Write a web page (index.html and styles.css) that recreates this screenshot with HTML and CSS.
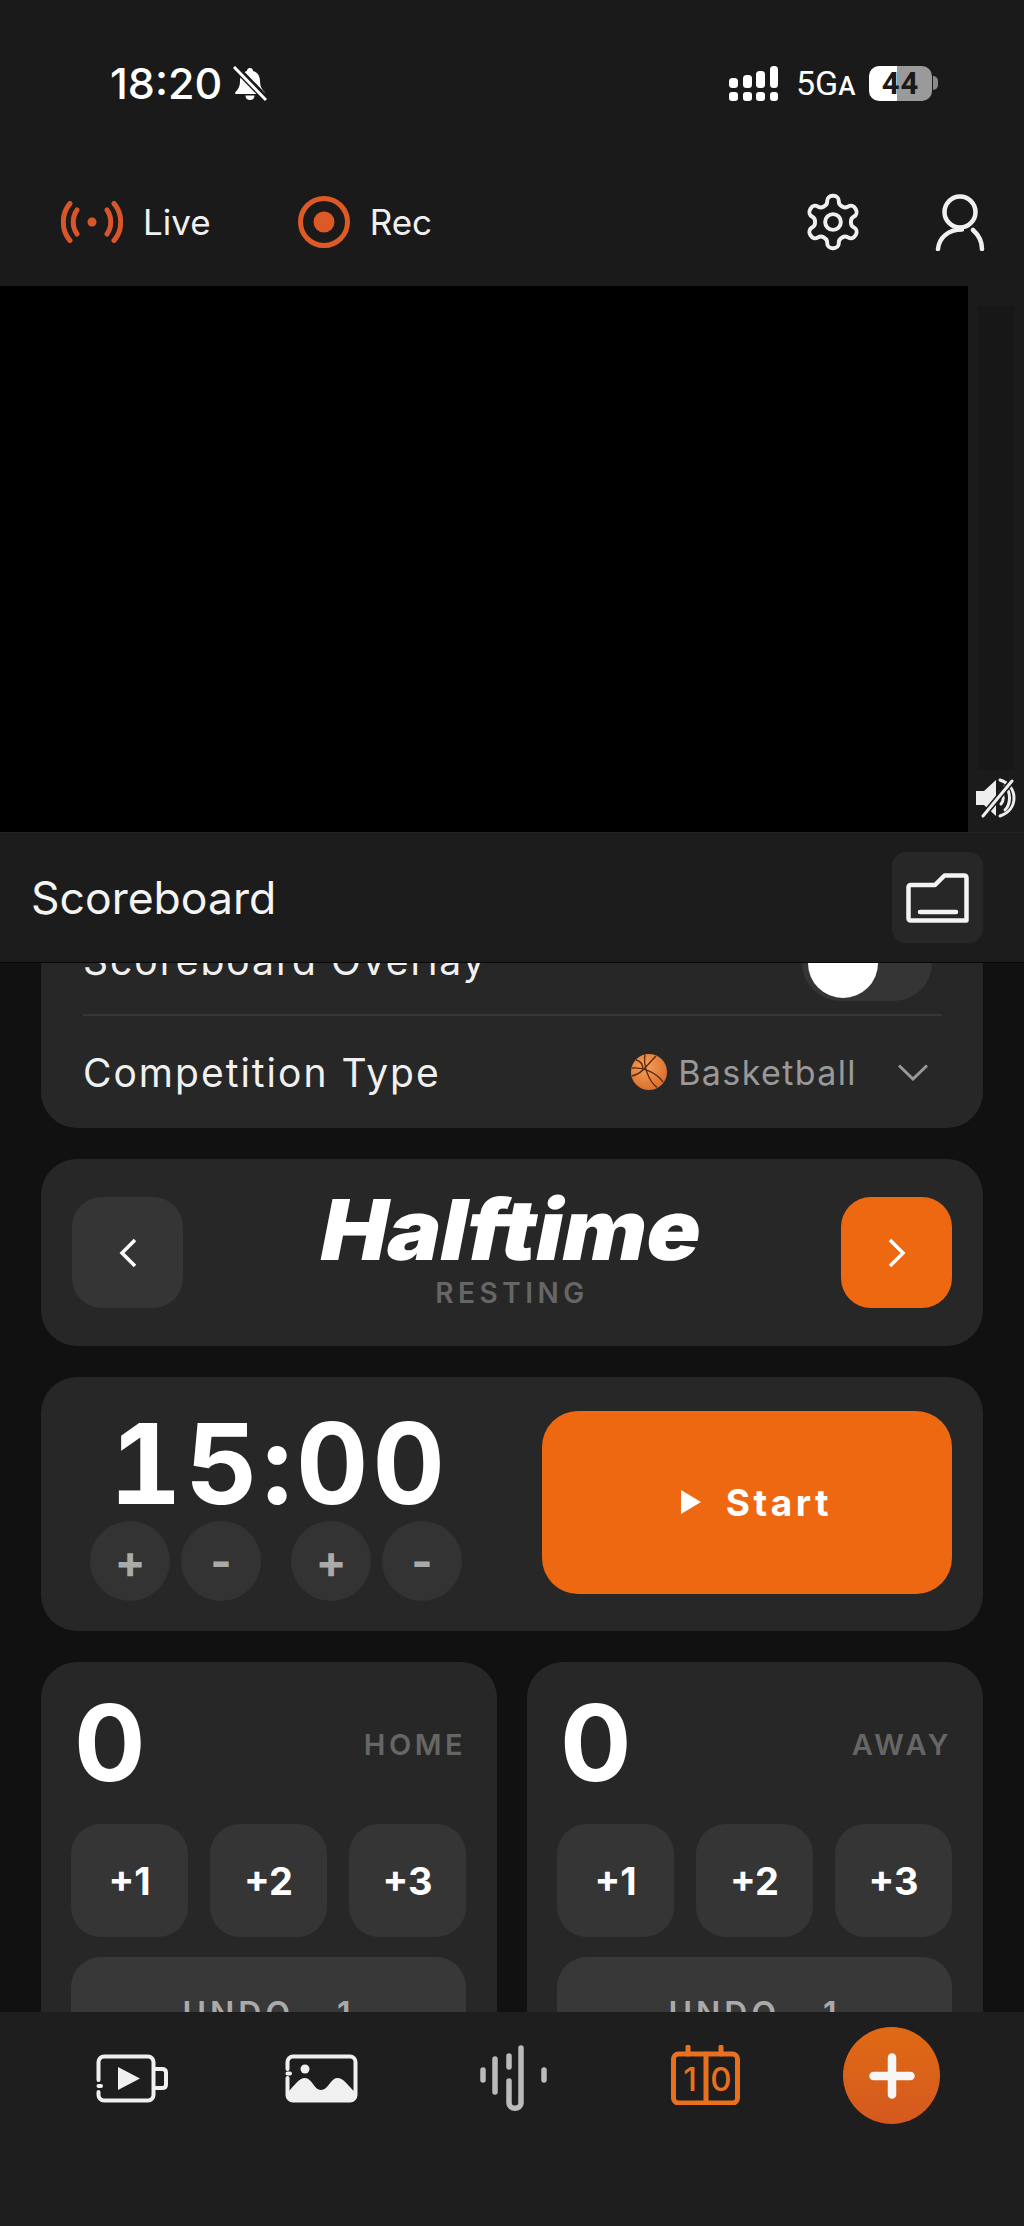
FILE: index.html
```html
<!DOCTYPE html>
<html lang="en">
<head>
    <meta charset="UTF-8">
    <meta name="viewport" content="width=device-width, initial-scale=1.0">
    <title>Scoreboard</title>
    <link rel="stylesheet" href="styles.css">
</head>
<body>

    <header class="header">
        <div class="status">
            <div class="status-left">
                <span class="clock">18:20</span>
                <svg class="bell" viewBox="0 0 34 35">
                    <path d="M17 2c-1.800 0-3 1.200-3 3-4.500 1.300-7 5-7 10 0 5-1.500 8-4.500 11-.8.900-.3 2 1 2h27c1.300 0 1.800-1.100 1-2-3-3-4.500-6-4.500-11 0-5-2.500-8.700-7-10 0-1.800-1.200-3-3-3z" fill="#fff"/>
                    <path d="M12.500 29.500h9c0 3-2 4.500-4.500 4.500s-4.500-1.500-4.500-4.500z" fill="#fff"/>
                    <path d="M2 1l32 33" stroke="#1a1a1a" stroke-width="7"/>
                    <path d="M1 1l32 33" stroke="#fff" stroke-width="3"/>
                </svg>
            </div>
            <div class="status-right">
                <svg class="signal" viewBox="0 0 49 35" fill="#fff">
                    <rect x="0" y="12" width="9" height="10" rx="3.500"/>
                    <rect x="14" y="9" width="9" height="13" rx="3.500"/>
                    <rect x="27" y="5" width="9" height="17" rx="3.500"/>
                    <rect x="41" y="0" width="8" height="22" rx="3.500"/>
                    <rect x="0" y="26" width="9" height="9" rx="3"/>
                    <rect x="14" y="26" width="9" height="9" rx="3"/>
                    <rect x="27" y="26" width="9" height="9" rx="3"/>
                    <rect x="41" y="26" width="8" height="9" rx="3"/>
                </svg>
                <span class="network">5G<small>A</small></span>
                <div class="battery"><span>44</span></div>
                <div class="battery-tip"></div>
            </div>
        </div>
        <div class="toolbar">
            <div class="toolbar-left">
                <div class="tool">
                    <svg class="live-icon" viewBox="0 0 62 42" fill="none" stroke="#d9562a" stroke-width="5" stroke-linecap="round">
                        <circle cx="31" cy="21" r="4.500" fill="#d9562a" stroke="none"/>
                        <path d="M16 9c-5 7-5 17 0 24"/>
                        <path d="M46 9c5 7 5 17 0 24"/>
                        <path d="M9 2.500C0 13 0 29 9 39.500"/>
                        <path d="M53 2.500C62 13 62 29 53 39.500"/>
                    </svg>
                    <span>Live</span>
                </div>
                <div class="tool">
                    <svg class="rec-icon" viewBox="0 0 52 52">
                        <circle cx="26" cy="26" r="23.500" fill="none" stroke="#dd5a26" stroke-width="5"/>
                        <circle cx="26" cy="26" r="10.500" fill="#dd5a26"/>
                    </svg>
                    <span>Rec</span>
                </div>
            </div>
            <div class="toolbar-right">
                <svg class="gear" viewBox="1.300 1.300 21.400 21.400" fill="none" stroke="#f0f0f0" stroke-width="1.500" stroke-linejoin="round">
                    <path d="M12.220 2h-.44a2 2 0 0 0-2 2v.18a2 2 0 0 1-1 1.730l-.43.25a2 2 0 0 1-2 0l-.15-.08a2 2 0 0 0-2.730.73l-.22.38a2 2 0 0 0 .73 2.730l.15.1a2 2 0 0 1 1 1.720v.51a2 2 0 0 1-1 1.740l-.15.09a2 2 0 0 0-.73 2.730l.22.38a2 2 0 0 0 2.730.73l.15-.08a2 2 0 0 1 2 0l.43.25a2 2 0 0 1 1 1.730V20a2 2 0 0 0 2 2h.44a2 2 0 0 0 2-2v-.18a2 2 0 0 1 1-1.730l.43-.25a2 2 0 0 1 2 0l.15.08a2 2 0 0 0 2.730-.73l.22-.39a2 2 0 0 0-.73-2.730l-.15-.08a2 2 0 0 1-1-1.740v-.5a2 2 0 0 1 1-1.740l.15-.09a2 2 0 0 0 .73-2.730l-.22-.38a2 2 0 0 0-2.730-.73l-.15.08a2 2 0 0 1-2 0l-.43-.25a2 2 0 0 1-1-1.730V4a2 2 0 0 0-2-2z"/>
                    <circle cx="12" cy="12" r="3"/>
                </svg>
                <svg class="user" viewBox="0 0 50 57" fill="none" stroke="#f0f0f0" stroke-width="4.500" stroke-linecap="round">
                    <circle cx="25" cy="18" r="15.500"/>
                    <path d="M3 55C4 44 13 35.500 27 35.500"/>
                    <path d="M38 36c5 4.500 9 11 9 19"/>
                </svg>
            </div>
        </div>
    </header>

    <section class="preview">
        <div class="video"></div>
        <div class="strip">
            <div class="meter"></div>
            <svg class="mute" viewBox="0 0 40 40" fill="none" stroke="#eee" stroke-linecap="round">
                <path d="M0 13h8L20 2v36L8 27H0z" fill="#eee" stroke="none"/>
                <path d="M25 14c3 3.500 3 8.500 0 12" stroke-width="3"/>
                <path d="M29 8c6 6 6 18 0 24" stroke-width="3"/>
                <path d="M24 2c9 3 14 10 14 18s-5 15-14 18" stroke-width="3"/>
                <path d="M7 38L36 3" stroke="#1a1a1a" stroke-width="6"/>
                <path d="M7 38L36 3" stroke-width="3"/>
            </svg>
        </div>
    </section>

    <div class="sheet-bar">
        <span class="sheet-title">Scoreboard</span>
        <button class="folder-btn">
            <svg class="folder" viewBox="0 0 63 50" fill="none" stroke="#f4f4f4" stroke-width="4.500" stroke-linejoin="round" stroke-linecap="round">
                <path d="M2.500 14c0-1 1-2 2-2H29L38.500 2.500H58c1.500 0 2.500 1 2.500 2.500v42.500H5c-1.500 0-2.500-1-2.500-2.500z"/>
                <path d="M14 39h36"/>
            </svg>
        </button>
    </div>

    <main class="content">
        <div class="card settings">
            <div class="setting-row overlay-row">
                <span class="setting-label">Scoreboard Overlay</span>
                <div class="toggle"><div class="knob"></div></div>
            </div>
            <div class="setting-row type-row">
                <span class="setting-label">Competition Type</span>
                <div class="type-value">
                    <svg class="ball" viewBox="0 0 36 36">
                        <defs>
                            <radialGradient id="ballFill" cx="0.4" cy="0.35" r="0.75">
                                <stop offset="0" stop-color="#f4a156"/>
                                <stop offset="1" stop-color="#d9692a"/>
                            </radialGradient>
                        </defs>
                        <circle cx="18" cy="18" r="18" fill="url(#ballFill)"/>
                        <g fill="none" stroke="#5c2a10" stroke-width="1.400">
                            <path d="M1 14c10-1 24 4 31 14"/>
                            <path d="M14 .5c-2 10 3 26 12 33"/>
                            <path d="M25 2c-5 5-9 10-13 14-3 3-7 5-11 6"/>
                            <path d="M5 6c5 1 7 5 7 10"/>
                        </g>
                    </svg>
                    <span>Basketball</span>
                    <svg class="chevron" viewBox="0 0 30 17" fill="none" stroke="#999" stroke-width="3">
                        <path d="M1 1.500L15 15 29 1.500"/>
                    </svg>
                </div>
            </div>
        </div>

        <div class="card period">
            <button class="square-btn">
                <svg class="arrow" viewBox="0 0 20 30" fill="none" stroke="#fff" stroke-width="3.500">
                    <path d="M17 2L4 15l13 13"/>
                </svg>
            </button>
            <div class="period-text">
                <div class="period-name">Halftime</div>
                <div class="period-sub">RESTING</div>
            </div>
            <button class="square-btn next">
                <svg class="arrow" viewBox="0 0 20 30" fill="none" stroke="#fff" stroke-width="3.500">
                    <path d="M3 2l13 13L3 28"/>
                </svg>
            </button>
        </div>

        <div class="card clock-card">
            <div class="timer-col">
                <div class="timer">15:00</div>
                <div class="adjust">
                    <div class="adjust-pair">
                        <button class="round-btn">+</button>
                        <button class="round-btn">-</button>
                    </div>
                    <div class="adjust-pair">
                        <button class="round-btn">+</button>
                        <button class="round-btn">-</button>
                    </div>
                </div>
            </div>
            <button class="start-btn">
                <svg class="play" viewBox="0 0 22 26"><path d="M1 1l20 12L1 25z" fill="#fff"/></svg>
                <span>Start</span>
            </button>
        </div>

        <div class="teams">
            <div class="card team">
                <div class="team-head">
                    <span class="team-score">0</span>
                    <span class="team-name">HOME</span>
                </div>
                <div class="points">
                    <button class="point-btn">+1</button>
                    <button class="point-btn">+2</button>
                    <button class="point-btn">+3</button>
                </div>
                <button class="undo-btn">UNDO -1</button>
            </div>
            <div class="card team">
                <div class="team-head">
                    <span class="team-score">0</span>
                    <span class="team-name">AWAY</span>
                </div>
                <div class="points">
                    <button class="point-btn">+1</button>
                    <button class="point-btn">+2</button>
                    <button class="point-btn">+3</button>
                </div>
                <button class="undo-btn">UNDO -1</button>
            </div>
        </div>
    </main>

    <nav class="tabbar">
        <svg class="tab-media" viewBox="0 0 73 49" fill="none" stroke="#f0f0f0" stroke-width="4" stroke-linecap="round">
            <path d="M2.500 26V8a5.500 5.500 0 0 1 5.500-5.500h44a5.500 5.500 0 0 1 5.500 5.500v33a5.500 5.500 0 0 1-5.500 5.500H8A5.500 5.500 0 0 1 2.500 41v-3"/>
            <path d="M2.500 32h2.500"/>
            <path d="M58 15h8c2.500 0 4 1 4 3.500v12c0 2.500-1.500 3.500-4 3.500h-8"/>
            <path d="M22 13l22 11.500L22 36z" fill="#f0f0f0" stroke="none"/>
        </svg>
        <svg class="tab-media tab-image" viewBox="0 0 73 49" fill="none" stroke="#f0f0f0" stroke-width="4" stroke-linecap="round">
            <path d="M2.500 15V8a5.500 5.500 0 0 1 5.500-5.500h57a5.500 5.500 0 0 1 5.500 5.500v33a5.500 5.500 0 0 1-5.500 5.500H8A5.500 5.500 0 0 1 2.500 41V24"/>
            <path d="M2.500 19.500h2.500"/>
            <circle cx="20" cy="15" r="4.500" fill="#f0f0f0" stroke="none"/>
            <path d="M3 38c6-6 11-14 17-14 7 0 9 12 16 12s10-12 16-12c7 0 11 8 18 14v3c0 3-2 5-5 5H8c-3 0-5-2-5-5z" fill="#f0f0f0" stroke="none"/>
        </svg>
        <svg class="tab-wave" viewBox="0 0 68 66" fill="none" stroke="#bbb" stroke-width="5.500" stroke-linecap="round">
            <path d="M4 25v10"/>
            <path d="M16 14v33"/>
            <path d="M30 11v11"/>
            <path d="M30 36v22c0 7 12 7 12 0V3"/>
            <path d="M65 25v10"/>
        </svg>
        <svg class="tab-score" viewBox="0 0 69 60" fill="none" stroke="#e9701c" stroke-width="5" stroke-linecap="round">
            <rect x="2.500" y="9" width="64" height="49" rx="5"/>
            <path d="M35 9v49"/>
            <path d="M17 2v7"/>
            <path d="M50 2v7"/>
            <text x="19" y="46" text-anchor="middle" class="tab-digit">1</text>
            <text x="50" y="46" text-anchor="middle" class="tab-digit">0</text>
        </svg>
        <button class="fab">
            <svg class="fab-plus" viewBox="0 0 46 46" stroke="#f6f6f6" stroke-width="8.500" stroke-linecap="round">
                <path d="M23 4.500v37"/>
                <path d="M4.500 23h37"/>
            </svg>
        </button>
    </nav>

</body>
</html>
```

FILE: styles.css
```css
* {
    box-sizing: border-box;
}
html, body {
    margin: 0;
    padding: 0;
}
body {
    width: 1024px;
    height: 2226px;
    display: flex;
    flex-direction: column;
    overflow: hidden;
    background-color: #111111;
    color: #ffffff;
    font-family: Inter, "Liberation Sans", sans-serif;
}
button {
    border: 0;
    padding: 0;
    color: inherit;
    font-family: inherit;
}
svg {
    display: block;
    flex: none;
}

/* header */
.header {
    height: 286px;
    flex: none;
    background-color: #1a1a1a;
    padding-top: 60px;
}
.status {
    height: 46px;
    display: flex;
    align-items: center;
    justify-content: space-between;
    padding: 0 86px 0 110px;
}
.status-left, .status-right {
    display: flex;
    align-items: center;
}
.clock {
    font-size: 43px;
    font-weight: 500;
    width: 113px;
    white-space: nowrap;
}
.bell {
    width: 34px;
    height: 35px;
    margin-left: 10px;
}
.signal {
    width: 49px;
    height: 35px;
}
.network {
    width: 57px;
    margin-left: 18px;
    font-family: Roboto, sans-serif;
    font-size: 34px;
    font-weight: 400;
    white-space: nowrap;
}
.network small {
    font-size: 26px;
    font-weight: 500;
}
.battery {
    width: 63px;
    height: 35px;
    margin-left: 16px;
    border-radius: 10px;
    background: linear-gradient(90deg, #ffffff 44%, #9a9a9a 44%);
    color: #1a1a1a;
    font-family: Roboto, sans-serif;
    font-size: 31px;
    font-weight: 700;
    letter-spacing: 1px;
    text-align: center;
    line-height: 36px;
}
.battery-tip {
    width: 5px;
    height: 14px;
    margin-left: 1px;
    border-radius: 0 5px 5px 0;
    background-color: #8a8a8a;
}
.toolbar {
    height: 88px;
    margin-top: 72px;
    display: flex;
    align-items: center;
    justify-content: space-between;
    padding: 0 39px 0 61px;
}
.toolbar-left, .toolbar-right {
    display: flex;
    align-items: center;
}
.toolbar-left {
    gap: 87px;
}
.toolbar-right {
    gap: 74px;
}
.tool {
    display: flex;
    align-items: center;
    gap: 20px;
    font-size: 35px;
    color: #f0f0f0;
}
.live-icon {
    width: 62px;
    height: 42px;
}
.rec-icon {
    width: 52px;
    height: 52px;
}
.gear {
    width: 56px;
    height: 58px;
}
.user {
    width: 50px;
    height: 57px;
}

/* camera preview */
.preview {
    height: 546px;
    flex: none;
    display: flex;
    background-color: #000000;
}
.video {
    flex: 1;
}
.strip {
    width: 56px;
    display: flex;
    flex-direction: column;
    align-items: center;
    padding: 20px 0 14px;
    background-color: #1b1b1b;
}
.meter {
    width: 36px;
    flex: 1;
    background-color: #171717;
    margin-bottom: 8px;
}
.mute {
    width: 40px;
    height: 40px;
}

/* sheet title */
.sheet-bar {
    height: 131px;
    flex: none;
    display: flex;
    align-items: center;
    justify-content: space-between;
    padding: 0 41px 0 31px;
    background-color: #1c1c1c;
    border-top: 1px solid #222222;
    border-bottom: 1px solid #080808;
}
.sheet-title {
    font-size: 44.500px;
    color: #f4f4f4;
}
.folder-btn {
    width: 91px;
    height: 91px;
    display: flex;
    align-items: center;
    justify-content: center;
    border-radius: 14px;
    background-color: #272727;
}
.folder {
    width: 63px;
    height: 50px;
}

/* scrolled content */
.content {
    flex: 1;
    min-height: 0;
    overflow: hidden;
    display: flex;
    flex-direction: column;
    gap: 31px;
    padding: 0 41px;
}
.card {
    background-color: #272727;
    border-radius: 36px;
}
.settings {
    margin-top: -58px;
    flex: none;
    padding: 0 41px 0 42px;
}
.setting-row {
    display: flex;
    align-items: center;
    justify-content: space-between;
}
.overlay-row {
    height: 111px;
    padding-top: 2px;
    border-bottom: 2px solid #363636;
}
.type-row {
    height: 112px;
}
.setting-label {
    font-size: 39px;
    letter-spacing: 2px;
    color: #f0f0f0;
}
.toggle {
    width: 130px;
    height: 76px;
    margin: 4px 10px 0 0;
    padding-left: 6px;
    display: flex;
    align-items: center;
    border-radius: 38px;
    background-color: #353535;
}
.knob {
    width: 70px;
    height: 70px;
    border-radius: 50%;
    background-color: #ffffff;
}
.type-value {
    display: flex;
    align-items: center;
    font-size: 34px;
    letter-spacing: 1.400px;
    color: #999999;
}
.ball {
    width: 36px;
    height: 36px;
    margin-right: 11px;
}
.chevron {
    width: 30px;
    height: 17px;
    margin: 0 14px 0 41px;
}
.period {
    height: 187px;
    flex: none;
    display: flex;
    align-items: center;
    justify-content: space-between;
    padding: 0 31px;
}
.square-btn {
    width: 111px;
    height: 111px;
    display: flex;
    align-items: center;
    justify-content: center;
    border-radius: 30px;
    background-color: #353535;
}
.square-btn.next {
    background-color: #ee6812;
}
.arrow {
    width: 20px;
    height: 30px;
}
.period-text {
    text-align: center;
}
/* upright Inter leaned over: its real italic has a descending f */
.period-name {
    font-size: 84px;
    font-weight: 900;
    line-height: 86px;
    margin-top: -10px;
    transform: skewX(-11deg) scaleX(1.060);
}
.period-sub {
    font-size: 28px;
    font-weight: 600;
    letter-spacing: 4.500px;
    line-height: 32px;
    margin-top: 4px;
    color: #666666;
}
.clock-card {
    height: 254px;
    flex: none;
    display: flex;
    align-items: center;
    justify-content: space-between;
    padding: 0 31px 0 49px;
}
.timer-col {
    width: 372px;
    align-self: flex-start;
    padding-top: 29px;
    display: flex;
    flex-direction: column;
    align-items: center;
}
.timer {
    font-size: 112px;
    font-weight: 700;
    line-height: 115px;
    margin-left: 6px;
    letter-spacing: 4px;
    font-variant-numeric: tabular-nums;
}
.adjust {
    display: flex;
    gap: 30px;
}
.adjust-pair {
    display: flex;
    gap: 11px;
}
.round-btn {
    width: 80px;
    height: 80px;
    border-radius: 50%;
    background-color: #333333;
    color: #aaaaaa;
    font-size: 46px;
    font-weight: 700;
}
.start-btn {
    width: 410px;
    height: 183px;
    margin-top: -4px;
    padding-left: 18px;
    display: flex;
    align-items: center;
    justify-content: center;
    gap: 24px;
    border-radius: 36px;
    background-color: #ee6812;
    font-size: 37px;
    font-weight: 700;
    letter-spacing: 3.500px;
}
.play {
    width: 22px;
    height: 26px;
}
.teams {
    display: grid;
    grid-template-columns: 456px 456px;
    gap: 30px;
    flex: none;
}
.team {
    height: 420px;
    padding: 0 31px 0 30px;
}
.team-head {
    height: 162px;
    display: flex;
    align-items: center;
    justify-content: space-between;
    padding: 0 0 0 3px;
}
.team-score {
    font-size: 106px;
    font-weight: 700;
    line-height: 120px;
}
.team-name {
    font-size: 29px;
    font-weight: 600;
    letter-spacing: 3.500px;
    color: #666666;
    margin-top: 2px;
}
.points {
    display: grid;
    grid-template-columns: repeat(3, 117px);
    justify-content: space-between;
}
.point-btn {
    height: 113px;
    border-radius: 30px;
    background-color: #353535;
    font-size: 38px;
    font-weight: 700;
}
.undo-btn {
    width: 100%;
    height: 113px;
    margin-top: 20px;
    border-radius: 30px;
    background-color: #383838;
    color: #aaaaaa;
    font-size: 32px;
    font-weight: 600;
    letter-spacing: 4px;
    word-spacing: 12px;
}

/* bottom tabs */
.tabbar {
    height: 214px;
    flex: none;
    display: flex;
    align-items: flex-start;
    padding: 15px 0 0 96px;
    background-color: #1e1e1e;
    position: relative;
    z-index: 1;
}
.tab-media {
    width: 73px;
    height: 49px;
    margin-top: 27px;
}
.tab-image {
    margin-left: 116px;
}
.tab-wave {
    width: 68px;
    height: 66px;
    margin: 18px 0 0 121px;
}
.tab-score {
    width: 69px;
    height: 60px;
    margin: 18px 0 0 124px;
}
.tab-digit {
    font-family: Inter, sans-serif;
    font-size: 33px;
    font-weight: 500;
    fill: #e9701c;
    stroke: none;
}
.fab {
    width: 97px;
    height: 97px;
    margin-left: 103px;
    display: flex;
    align-items: center;
    justify-content: center;
    border-radius: 50%;
    background: linear-gradient(180deg, #e06a14, #d5591f);
}
.fab-plus {
    width: 46px;
    height: 46px;
}
```
